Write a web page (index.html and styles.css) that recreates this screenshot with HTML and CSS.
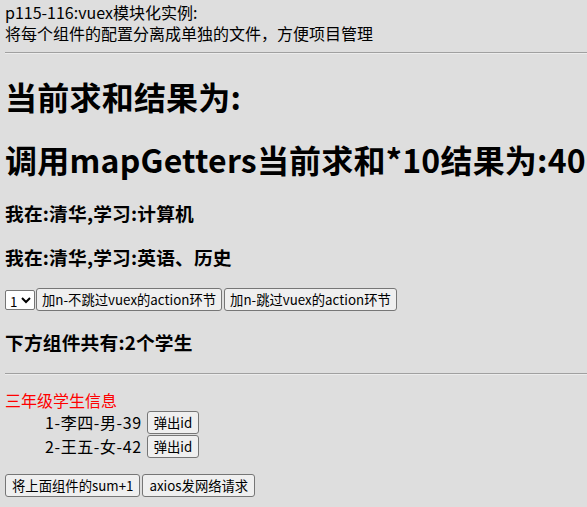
FILE: index.html
```html
<!DOCTYPE html>
<html lang="zh-CN">
<head>
    <meta charset="UTF-8">
    <meta name="viewport" content="width=device-width, initial-scale=1.0">
    <title>vuex模块化实例</title>
    <link rel="stylesheet" href="styles.css">
</head>
<body>

<div class="intro">
    <div>p115-116:vuex模块化实例:</div>
    <div>将每个组件的配置分离成单独的文件，方便项目管理</div>
</div>
<hr>

<div class="count">
    <h1>当前求和结果为:</h1>
    <h1>调用mapGetters当前求和*10结果为:40</h1>
    <h3>我在:清华,学习:计算机</h3>
    <h3>我在:清华,学习:英语、历史</h3>
    <div class="controls">
        <select>
            <option value="1">1</option>
            <option value="2">2</option>
            <option value="3">3</option>
        </select>
        <button>加n-不跳过vuex的action环节</button>
        <button>加n-跳过vuex的action环节</button>
    </div>
    <h3>下方组件共有:2个学生</h3>
</div>
<hr>

<div class="students">
    <div class="grade">三年级学生信息</div>
    <ul>
        <li><span class="student">1-李四-男-39</span> <button>弹出id</button></li>
        <li><span class="student">2-王五-女-42</span> <button>弹出id</button></li>
    </ul>
    <button>将上面组件的sum+1</button><button>axios发网络请求</button>
</div>

</body>
</html>
```

FILE: styles.css
```css
body {
    margin: 0;
    padding: 2px 0 0 5px;
    background-color: #dedede;
    color: #000;
    font-family: "Noto Sans CJK SC", "Noto Sans", sans-serif;
    font-size: 16px;
    line-height: 1.32;
    overflow: hidden;
}

hr {
    margin: 8px 0;
    border: none;
    border-top: 1px solid #a0a0a0;
    border-bottom: 1px solid #ececec;
}

h1 {
    font-size: 32px;
    margin: 21px 0;
    line-height: 42px;
    letter-spacing: 0.22px;
    white-space: nowrap;
}

h3 {
    font-size: 18.72px;
    margin: 18.7px 0;
    line-height: 24.7px;
    letter-spacing: 0.2px;
}

.controls {
    display: flex;
    align-items: center;
}

select {
    font-family: inherit;
    font-size: 13.33px;
    height: 20px;
    width: 30px;
    margin: 0 1px 0 0;
    padding: 0;
    background: #fff;
    border: 1px solid #767676;
    border-radius: 2px;
}

button {
    font-family: inherit;
    font-size: 13.33px;
    line-height: 17px;
    padding: 2px 6px;
    margin: 0 2px 0 0;
    background-color: #efefef;
    color: #000;
    border: 1px solid #767676;
    border-radius: 3px;
}

.controls button {
    padding: 2px 5px;
}

.students {
    margin: 15px 0;
}

.grade {
    color: #ff0000;
}

ul {
    margin: 0 0 16px;
    padding-left: 40px;
    list-style: none;
}

li {
    height: 23.5px;
    display: flex;
    align-items: center;
    gap: 5px;
}

.student {
    letter-spacing: 0.6px;
}

li button {
    margin: 0;
}
```
